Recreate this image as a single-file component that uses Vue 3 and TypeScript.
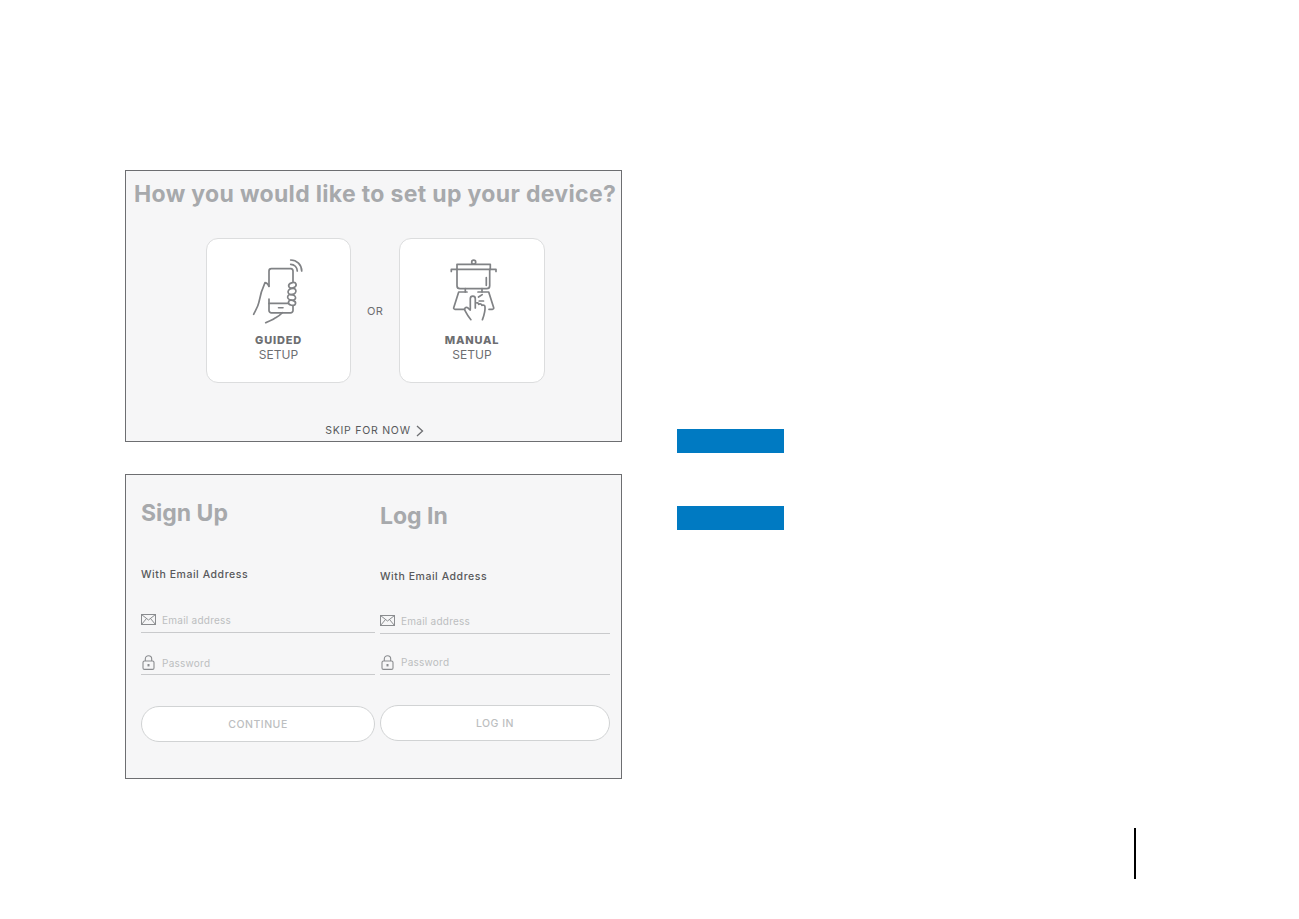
<script setup lang="ts">
interface Col { key: string; title: string; action: string }
const cols: Col[] = [
  { key: 'signup', title: 'Sign Up', action: 'CONTINUE' },
  { key: 'login', title: 'Log In', action: 'LOG IN' },
]
</script>

<template>
  <div class="page">
    <div class="left">
      <section class="panel setup">
        <h1 class="title">How you would like to set up your device?</h1>
        <div class="choices">
          <div class="card">
            <svg class="icon" viewBox="0 0 60 70" width="60" height="70" fill="none" stroke="#808285" stroke-width="1.7" stroke-linecap="round" stroke-linejoin="round">
              <path d="M20 30V15a2.400 2.400 0 0 1 2.400-2.400h19.400A2.400 2.400 0 0 1 44 15v10.500M44 50v4.400a2.400 2.400 0 0 1-2.400 2.400H22.400a2.400 2.400 0 0 1-2.400-2.400V43" />
              <path d="M20 47.400h19" />
              <path d="M29.500 51.800h4.500" stroke-width="1.600" />
              <path d="M41.700 8.300c3.600 0 6.600 3 6.600 6.700" />
              <path d="M41.700 4c6.100 0 11 4.900 11 11" />
              <ellipse cx="43.400" cy="29.300" rx="3.800" ry="2.600" transform="rotate(-18 43.400 29.300)" />
              <ellipse cx="43" cy="35.500" rx="4" ry="3" transform="rotate(-18 43 35.500)" />
              <ellipse cx="42.600" cy="41.400" rx="4" ry="2.800" transform="rotate(12 42.600 41.400)" />
              <ellipse cx="43" cy="46.800" rx="3.600" ry="2.500" transform="rotate(14 43 46.800)" />
              <path d="M4.700 58.300c1.200-3 4.200-7 5.100-11.600.9-5 2.600-12.300 6.200-20 1.800.4 3.400 1.800 4 3.800" />
              <path d="M16.700 66.700c3-1.800 7-2.200 10-5 2.400-1.400 4.800-3 6.600-5" />
            </svg>
            <div class="strong">GUIDED</div>
            <div class="light">SETUP</div>
          </div>
          <div class="or">OR</div>
          <div class="card wide">
            <svg class="icon" viewBox="0 0 60 70" width="60" height="70" fill="none" stroke="#808285" stroke-width="1.7" stroke-linecap="round" stroke-linejoin="round">
              <circle cx="31.700" cy="6.200" r="2" />
              <path d="M15 13.300V8.300h33.300v5" />
              <path d="M9.300 15.500v-2.200H54v2.200" />
              <path d="M15 13.300v16.400a3 3 0 0 0 3 3h26.700a3 3 0 0 0 3-3V13.300" />
              <path d="M44.300 21.700v7.600" />
              <path d="M23.300 32.700V36M40 32.700V36" />
              <path d="M25 36h-8.300l-5 15.700a1.300 1.300 0 0 0 1.300 1.600h9.500" />
              <path d="M36 36h10.700l5 15.700a1.300 1.300 0 0 1-1.300 1.600h-3.400" />
              <path d="M28.300 53V42.700a2.500 2.500 0 0 1 5 0v9.300M33.300 47.300c1.600-1 3.200-.6 3.400 1M36.700 48.300c1.400-.8 3-.4 3.200 1M40 49.300c1.500-.6 2.800 0 3 1.500.5 4.500-.8 8-2.600 12.900" />
              <path d="M28.300 54l-2.500-2.200c-2-1.300-4 .6-2.900 2.600 1.500 2.900 2.400 5.300 6 9.300" />
              <path d="M36.500 41l3.700-2.400M37.200 45h4.300" />
            </svg>
            <div class="strong">MANUAL</div>
            <div class="light">SETUP</div>
          </div>
        </div>
        <div class="skip">
          <span>SKIP FOR NOW</span>
          <svg viewBox="0 0 8 12" width="8" height="12" fill="none" stroke="#6d6e71" stroke-width="1.300"><path d="M1 1l5.500 5L1 11" /></svg>
        </div>
      </section>

      <section class="panel auth">
        <div v-for="c in cols" :key="c.key" class="col" :class="c.key">
          <h2 class="head">{{ c.title }}</h2>
          <div class="with">With Email Address</div>
          <div class="field email">
            <svg viewBox="0 0 15 11" width="15" height="11" fill="none" stroke="#8a8c8f" stroke-width="1"><rect x=".5" y=".5" width="14" height="10" /><path d="M.5.500l7 5.500 7-5.500M.5 10.500l5-6M14.500 10.500l-5-6" /></svg>
            <span>Email address</span>
          </div>
          <div class="field password">
            <svg viewBox="0 0 13 15" width="13" height="15" fill="none" stroke="#8a8c8f" stroke-width="1.100"><rect x="1" y="6" width="11" height="8.400" rx="1.500" /><path d="M3.300 6V4a3.200 3.200 0 0 1 6.400 0v2" /><rect x="5.500" y="9" width="2" height="2.400" fill="#8a8c8f" stroke="none" /></svg>
            <span>Password</span>
          </div>
          <div class="btn">{{ c.action }}</div>
        </div>
      </section>
    </div>

    <div class="bars">
      <div class="bar"></div>
      <div class="bar"></div>
    </div>

    <div class="rule"></div>
  </div>
</template>

<style>
html, body { margin: 0; background: #fff; }
</style>

<style scoped>
.page {
  display: flex;
  align-items: flex-start;
  width: 1299px;
  height: 919px;
  overflow: hidden;
  background: #fff;
  font-family: "Inter", "Liberation Sans", sans-serif;
}
.left {
  display: flex;
  flex-direction: column;
  gap: 32px;
  width: 497px;
  margin: 170px 0 0 125px;
  flex: none;
}
.panel {
  box-sizing: border-box;
  background: #f6f6f7;
  border: 1px solid #6d6e71;
}
.setup { height: 272px; }
.title {
  margin: 8px 0 0;
  padding-left: 8px;
  font-size: 23px;
  line-height: 30px;
  font-weight: 700;
  letter-spacing: .33px;
  white-space: nowrap;
  color: #a7a9ac;
}
.choices {
  display: flex;
  align-items: stretch;
  margin: 29px 0 0 80px;
}
.card {
  box-sizing: border-box;
  width: 145px;
  height: 145px;
  padding-top: 17px;
  background: #fff;
  border: 1px solid #dcddde;
  border-radius: 12px;
  text-align: center;
}
.wide { width: 146px; }
.icon {
  display: block;
  margin: 0 auto;
}
.strong {
  margin-top: 7px;
  font-size: 11px;
  line-height: 14px;
  font-weight: 800;
  letter-spacing: .8px;
  color: #6d6e71;
}
.light {
  font-size: 12px;
  line-height: 15px;
  color: #6d6e71;
}
.or {
  width: 48px;
  align-self: center;
  text-align: center;
  font-size: 11px;
  letter-spacing: .3px;
  color: #6d6e71;
}
.skip {
  display: flex;
  justify-content: center;
  align-items: center;
  gap: 5px;
  margin-top: 41px;
  padding-left: 2px;
  font-size: 10.500px;
  line-height: 14px;
  letter-spacing: .75px;
  color: #58595b;
}
.auth {
  display: flex;
  height: 305px;
  width: 497px;
  padding-left: 15px;
  gap: 5px;
}
.col { display: flex; flex-direction: column; flex: none; }
.signup { width: 234px; padding-top: 23px; }
.login { width: 230px; padding-top: 26px; }
.head {
  margin: 0;
  font-size: 23px;
  line-height: 30px;
  font-weight: 700;
  color: #a7a9ac;
}
.with {
  font-size: 10.500px;
  line-height: 14px;
  letter-spacing: .55px;
  font-weight: 500;
  color: #58595b;
}
.signup .with { margin-top: 40px; }
.login .with { margin-top: 39px; }
.field {
  box-sizing: border-box;
  display: flex;
  align-items: center;
  gap: 6px;
  height: 22px;
  padding-bottom: 4px;
  border-bottom: 1px solid #c9cacc;
  font-size: 10px;
  letter-spacing: .25px;
  color: #bcbec0;
}
.field svg { flex: none; }
.field span { line-height: 14px; }
.password { gap: 7px; padding-left: 1px; padding-bottom: 2px; }
.signup .email { margin-top: 29px; }
.signup .password { margin-top: 20px; }
.login .email { margin-top: 28px; }
.login .password { margin-top: 19px; }
.login .password { padding-bottom: 3px; }
.btn {
  box-sizing: border-box;
  height: 36px;
  display: flex;
  align-items: center;
  justify-content: center;
  background: #fff;
  border: 1px solid #d1d3d4;
  border-radius: 18px;
  font-size: 10.500px;
  font-weight: 500;
  letter-spacing: .5px;
  color: #bcbec0;
}
.signup .btn { margin-top: 31px; }
.login .btn { margin-top: 30px; }
.bars {
  display: flex;
  flex-direction: column;
  gap: 53px;
  margin: 429px 0 0 55px;
  flex: none;
}
.bar {
  width: 107px;
  height: 24px;
  background: #007ac2;
}
.rule {
  flex: none;
  width: 2px;
  height: 51px;
  margin: 828px 0 0 350px;
  background: #000;
}
</style>
